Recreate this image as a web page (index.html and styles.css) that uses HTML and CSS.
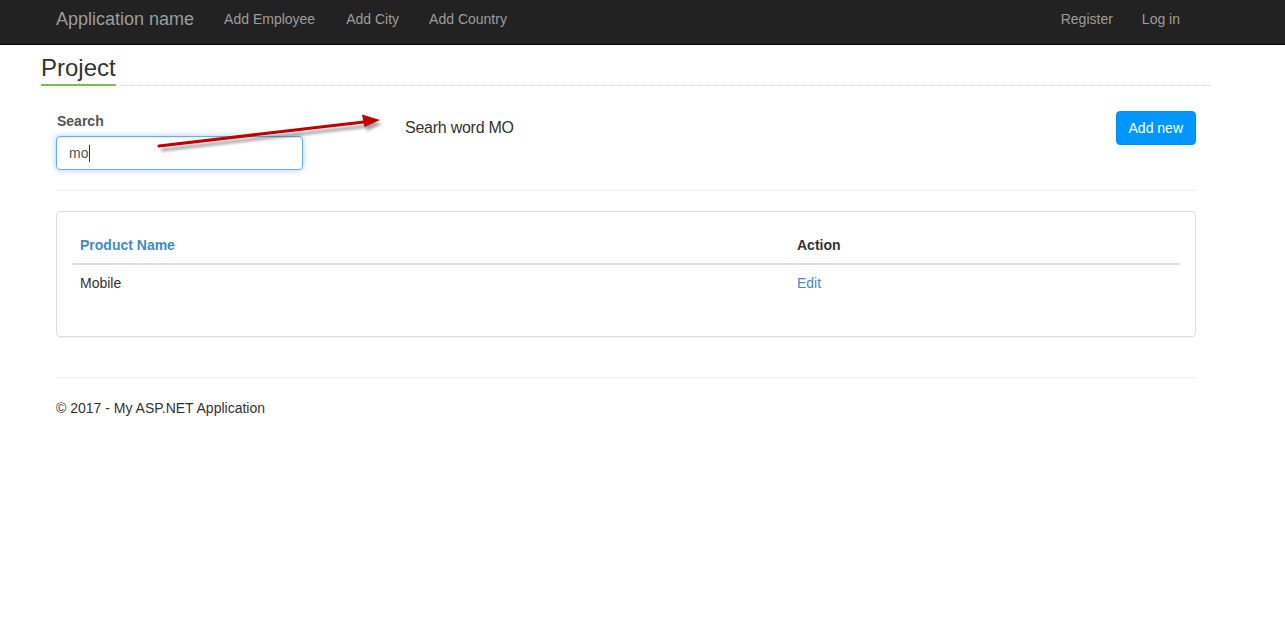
FILE: index.html
```html
<!DOCTYPE html>
<html>
<head>
<meta charset="utf-8">
<title>Project</title>
<link rel="stylesheet" href="styles.css">
</head>
<body>
<nav class="navbar">
  <div class="wrap nav-inner">
    <a class="brand" href="#">Application name</a>
    <ul class="nav-links">
      <li><a href="#">Add Employee</a></li>
      <li><a href="#">Add City</a></li>
      <li><a href="#">Add Country</a></li>
    </ul>
    <ul class="nav-links nav-right">
      <li><a href="#">Register</a></li>
      <li><a href="#">Log in</a></li>
    </ul>
  </div>
</nav>
<div class="wrap">
  <div class="title-bar"><h2 class="title">Project</h2></div>
  <div class="content">
    <div class="toolbar">
      <div class="search-group">
        <label class="search-label">Search</label>
        <div class="search-input"><span>mo</span><span class="caret"></span></div>
      </div>
      <div class="note">Searh word MO</div>
      <button class="btn-add">Add new</button>
      <svg class="arrow" width="240" height="40" viewBox="0 0 240 40">
        <defs>
          <filter id="sh" x="-10%" y="-50%" width="120%" height="200%">
            <feGaussianBlur stdDeviation="1.6"/>
          </filter>
        </defs>
        <g transform="translate(2,4)" opacity="0.45" filter="url(#sh)">
          <line x1="3" y1="30" x2="210" y2="6" stroke="#333" stroke-width="3"/>
          <polygon points="224,4 206,-1 209,11" fill="#333"/>
        </g>
        <line x1="3" y1="30" x2="212" y2="5.5" stroke="#c00000" stroke-width="3" stroke-linecap="round"/>
        <polygon points="224,4 206,-1.5 208.5,11" fill="#c00000"/>
      </svg>
    </div>
    <hr class="divider">
    <div class="panel">
      <table class="grid">
        <thead>
          <tr><th class="col-name"><a href="#">Product Name</a></th><th>Action</th></tr>
        </thead>
        <tbody>
          <tr><td>Mobile</td><td><a href="#">Edit</a></td></tr>
        </tbody>
      </table>
    </div>
    <hr class="divider footer-hr">
    <footer class="footer">© 2017 - My ASP.NET Application</footer>
  </div>
</div>
</body>
</html>
```

FILE: styles.css
```css
* { box-sizing: border-box; }
html, body { margin: 0; padding: 0; }
body {
  font-family: "Liberation Sans", Arial, Helvetica, sans-serif;
  font-size: 14px;
  line-height: 20px;
  color: #333;
  background: #fff;
}
a { text-decoration: none; }

.wrap {
  width: 1170px;
  margin-left: 41px;
}

.navbar {
  background: #222;
  border-bottom: 1px solid #080808;
  height: 45px;
}
.nav-inner {
  display: flex;
  padding: 0 15px;
  height: 44px;
}
.brand {
  font-size: 18px;
  line-height: 20px;
  color: #9d9d9d;
  padding: 9px 15px 0 0;
}
.nav-links {
  list-style: none;
  margin: 0;
  padding: 0;
  display: flex;
}
.nav-links a {
  display: block;
  padding: 9px 15px 0;
  color: #9d9d9d;
  font-size: 14px;
  line-height: 20px;
}
.nav-links li:nth-child(2) a { padding-left: 16px; }
.nav-right { margin-left: auto; }
.nav-right li:first-child a { padding-right: 14px; }
.nav-right li:last-child a { padding-left: 15px; padding-right: 16px; }

.title-bar {
  padding-top: 9px;
  border-bottom: 1px dotted #d6d6d6;
  height: 41px;
}
.title {
  display: inline-block;
  margin: 0;
  font-size: 24px;
  font-weight: normal;
  line-height: 28px;
  color: #333;
  padding-bottom: 2px;
  border-bottom: 2px solid #7ac143;
}

.content { padding: 0 15px; }

.toolbar {
  position: relative;
  display: flex;
  align-items: flex-start;
  margin-top: 25px;
}
.search-group { width: 246px; padding-left: 1px; }
.search-label {
  display: block;
  font-weight: bold;
  font-size: 14px;
  line-height: 20px;
  color: #555;
  margin-bottom: 5px;
}
.search-input {
  display: flex;
  align-items: center;
  height: 34px;
  width: 247px;
  margin-left: -1px;
  padding: 0 12px;
  border: 1px solid #66afe9;
  border-radius: 4px;
  box-shadow: inset 0 1px 1px rgba(0,0,0,.075), 0 0 6px rgba(102,175,233,.6);
  color: #555;
  font-size: 14px;
}
.caret {
  display: inline-block;
  width: 1px;
  height: 17px;
  background: #333;
  margin-left: 1px;
}
.note {
  margin-left: 103px;
  margin-top: 7px;
  font-size: 16px;
  letter-spacing: -0.25px;
  line-height: 20px;
  color: #333;
}
.btn-add {
  margin-left: auto;
  height: 34px;
  padding: 0 12px;
  background: #0096ff;
  color: #fff;
  border: 1px solid #0090f5;
  border-radius: 4px;
  font-family: inherit;
  font-size: 14px;
  line-height: 20px;
}
.arrow {
  position: absolute;
  left: 100px;
  top: 5px;
  overflow: visible;
}

.divider {
  border: 0;
  border-top: 1px solid #eee;
  margin: 20px 0 20px;
}

.panel {
  border: 1px solid #ddd;
  border-radius: 4px;
  padding: 15px;
  box-shadow: 0 1px 1px rgba(0,0,0,.05);
}
.grid {
  width: 100%;
  border-collapse: collapse;
  margin-bottom: 20px;
}
.grid th, .grid td {
  text-align: left;
  padding: 8px;
  line-height: 20px;
  vertical-align: top;
}
.grid th {
  font-weight: bold;
  border-bottom: 2px solid #ddd;
  color: #333;
}
.grid .col-name { width: 717px; }
.grid a { color: #428bca; }

.footer-hr { margin-top: 40px; }
.footer { line-height: 20px; color: #333; }
```
